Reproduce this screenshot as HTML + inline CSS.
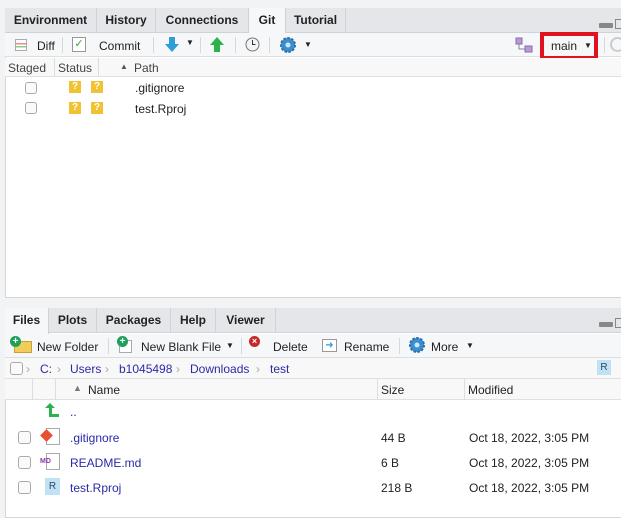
<!DOCTYPE html>
<html><head><style>
*{margin:0;padding:0;box-sizing:border-box}
body{width:621px;height:516px;background:#f2f3f4;font-family:"Liberation Sans",sans-serif;font-size:12px;color:#222;position:relative;overflow:hidden}
.a{position:absolute}
.pane{position:absolute;left:5px;right:-2px;background:#fff;border:1px solid #d4d6d9}
.tabs{position:absolute;left:5px;right:0;height:25px;background:#e4e6e9;border-bottom:1px solid #d0d2d5}
.tab{position:absolute;top:0;height:25px;border-right:1px solid #d0d2d5;font-weight:bold;font-size:12px;line-height:24px;text-align:center;color:#222}
.tab.on{background:#f6f7f8;height:26px}
.tb{position:absolute;left:5px;right:0;height:24px;background:#f6f7f8;border-bottom:1px solid #dcdee0}
.sep{position:absolute;width:1px;height:16px;background:#d6d8da}
.hdr{position:absolute;left:5px;right:0;background:#f8f8f8;border-bottom:1px solid #e0e0e0;color:#444}
.cb{position:absolute;width:12px;height:12px;border:1px solid #aaa;border-radius:3px;background:#fafafa}
.q{position:absolute;width:12px;height:12px;background:#f1c232;color:#fff;font-size:10px;font-weight:bold;text-align:center;line-height:12px}
.lnk{color:#2a2aa8}
</style></head><body>
<div class="pane" style="top:8px;height:290px"></div>
<div class="tabs" style="top:8px">
<div class="tab" style="left:0;width:92px">Environment</div>
<div class="tab" style="left:92px;width:59px">History</div>
<div class="tab" style="left:151px;width:93px">Connections</div>
<div class="tab on" style="left:244px;width:37px">Git</div>
<div class="tab" style="left:281px;width:60px">Tutorial</div>
</div>
<div class="a" style="left:599px;top:23px;width:14px;height:5px;background:#888;border-radius:1px"></div>
<div class="a" style="left:615px;top:19px;width:8px;height:10px;border:1px solid #888"></div>
<div class="tb" style="top:33px"></div>
<div class="a" style="left:15px;top:39px;width:12px;height:12px;border:1px solid #aaa;background:linear-gradient(#fff 30%,#e88 30%,#e88 45%,#fff 45%,#fff 60%,#8c8 60%,#8c8 75%,#fff 75%)"></div>
<div class="a" style="left:37px;top:39px">Diff</div>
<div class="sep" style="left:62px;top:37px"></div>
<div class="a" style="left:72px;top:37px;width:14px;height:15px;border:1px solid #999;background:#fff;color:#3a3;font-size:11px;line-height:12px;text-align:center">✓</div>
<div class="a" style="left:99px;top:39px">Commit</div>
<div class="sep" style="left:153px;top:37px"></div>
<svg class="a" style="left:164px;top:36px" width="16" height="17"><path d="M5 1h6v7h4l-7 8-7-8h4z" fill="#2e9fd6"/></svg>
<div class="a" style="left:186px;top:38px;font-size:8px">▼</div>
<div class="sep" style="left:200px;top:37px"></div>
<svg class="a" style="left:209px;top:36px" width="16" height="17"><path d="M8 1l7 8h-4v7H5V9H1z" fill="#2bb24c"/></svg>
<div class="sep" style="left:235px;top:37px"></div>
<svg class="a" style="left:245px;top:37px" width="15" height="15"><circle cx="7.5" cy="7.5" r="6.5" fill="#f4f4f4" stroke="#777"/><path d="M7.5 3v4.5h3" stroke="#333" fill="none"/></svg>
<div class="sep" style="left:269px;top:37px"></div>
<svg class="a" style="left:279px;top:36px" width="18" height="18"><circle cx="9" cy="9" r="7" fill="#3b8fd0" stroke="#2a6fa8" stroke-width="2" stroke-dasharray="2.5 1.5"/><circle cx="9" cy="9" r="2.5" fill="#cfe6f7"/></svg>
<div class="a" style="left:304px;top:40px;font-size:8px">▼</div>
<svg class="a" style="left:515px;top:37px" width="18" height="16"><rect x="1" y="1" width="6" height="6" fill="#b79bd6" stroke="#8a6bb0"/><rect x="10" y="9" width="7" height="6" fill="#b79bd6" stroke="#8a6bb0"/><path d="M4 7v5h6" stroke="#888" fill="none"/></svg>
<div class="a" style="left:540px;top:32px;width:58px;height:28px;border:4px solid #e0121f"></div>
<div class="a" style="left:551px;top:39px">main</div>
<div class="a" style="left:584px;top:41px;font-size:8px">▼</div>
<div class="sep" style="left:604px;top:37px"></div>
<div class="a" style="left:610px;top:37px;width:15px;height:15px;border:2px solid #ccc;border-radius:50%"></div>
<div class="hdr" style="top:58px;height:19px"></div>
<div class="a" style="left:8px;top:61px;color:#444">Staged</div>
<div class="a" style="left:54px;top:58px;width:1px;height:19px;background:#ddd"></div>
<div class="a" style="left:58px;top:61px;color:#444">Status</div>
<div class="a" style="left:98px;top:58px;width:1px;height:19px;background:#ddd"></div>
<div class="a" style="left:120px;top:62px;font-size:8px;color:#555">▲</div>
<div class="a" style="left:134px;top:61px;color:#444">Path</div>
<div class="cb" style="left:25px;top:82px"></div><div class="q" style="left:69px;top:81px">?</div><div class="q" style="left:91px;top:81px">?</div><div class="a" style="left:135px;top:81px">.gitignore</div>
<div class="cb" style="left:25px;top:102px"></div><div class="q" style="left:69px;top:102px">?</div><div class="q" style="left:91px;top:102px">?</div><div class="a" style="left:135px;top:102px">test.Rproj</div>
<div class="pane" style="top:308px;height:210px"></div>
<div class="tabs" style="top:308px">
<div class="tab on" style="left:0;width:44px">Files</div>
<div class="tab" style="left:44px;width:48px">Plots</div>
<div class="tab" style="left:92px;width:74px">Packages</div>
<div class="tab" style="left:166px;width:45px">Help</div>
<div class="tab" style="left:211px;width:60px">Viewer</div>
</div>
<div class="a" style="left:599px;top:322px;width:14px;height:5px;background:#888;border-radius:1px"></div>
<div class="a" style="left:615px;top:318px;width:8px;height:10px;border:1px solid #888"></div>
<div class="tb" style="top:334px"></div>
<div class="a" style="left:14px;top:341px;width:18px;height:12px;background:#f0cc5a;border:1px solid #c9a233"></div>
<div class="a" style="left:10px;top:336px;width:11px;height:11px;border-radius:50%;background:#1ea05a;color:#fff;font-size:10px;font-weight:bold;line-height:11px;text-align:center">+</div>
<div class="a" style="left:37px;top:340px">New Folder</div>
<div class="sep" style="left:108px;top:338px"></div>
<div class="a" style="left:119px;top:340px;width:13px;height:13px;border:1px solid #aaa;background:#fff"></div>
<div class="a" style="left:117px;top:336px;width:11px;height:11px;border-radius:50%;background:#1ea05a;color:#fff;font-size:10px;font-weight:bold;line-height:11px;text-align:center">+</div>
<div class="a" style="left:141px;top:340px">New Blank File</div>
<div class="a" style="left:226px;top:341px;font-size:8px">▼</div>
<div class="sep" style="left:241px;top:338px"></div>
<div class="a" style="left:249px;top:336px;width:11px;height:11px;border-radius:50%;background:#c62828;color:#fff;font-size:9px;font-weight:bold;line-height:11px;text-align:center">×</div>
<div class="a" style="left:273px;top:340px">Delete</div>
<div class="a" style="left:322px;top:339px;width:15px;height:13px;border:1px solid #999;background:#fff;color:#2e9fd6;font-size:10px;line-height:11px;text-align:center">➜</div>
<div class="a" style="left:344px;top:340px">Rename</div>
<div class="sep" style="left:399px;top:338px"></div>
<svg class="a" style="left:408px;top:336px" width="18" height="18"><circle cx="9" cy="9" r="7" fill="#3b8fd0" stroke="#2a6fa8" stroke-width="2" stroke-dasharray="2.5 1.5"/><circle cx="9" cy="9" r="2.5" fill="#cfe6f7"/></svg>
<div class="a" style="left:431px;top:340px">More</div>
<div class="a" style="left:466px;top:341px;font-size:8px">▼</div>
<div class="a" style="left:5px;right:0;top:358px;height:21px;background:#f8f8f8;border-bottom:1px solid #e0e0e0"></div>
<div class="cb" style="left:10px;top:362px;width:13px;height:13px"></div>
<div class="a" style="left:26px;top:362px;color:#aaa">›</div>
<div class="a lnk" style="left:40px;top:362px">C:</div>
<div class="a" style="left:57px;top:362px;color:#aaa">›</div>
<div class="a lnk" style="left:70px;top:362px">Users</div>
<div class="a" style="left:105px;top:362px;color:#aaa">›</div>
<div class="a lnk" style="left:119px;top:362px">b1045498</div>
<div class="a" style="left:176px;top:362px;color:#aaa">›</div>
<div class="a lnk" style="left:190px;top:362px">Downloads</div>
<div class="a" style="left:256px;top:362px;color:#aaa">›</div>
<div class="a lnk" style="left:270px;top:362px">test</div>
<div class="a" style="left:597px;top:360px;width:14px;height:15px;background:#bfe3f5;color:#346;font-size:10px;text-align:center;line-height:15px">R</div>
<div class="hdr" style="top:379px;height:21px"></div>
<div class="a" style="left:32px;top:379px;width:1px;height:21px;background:#ddd"></div>
<div class="a" style="left:55px;top:379px;width:1px;height:21px;background:#ddd"></div>
<div class="a" style="left:73px;top:383px;font-size:9px;color:#777">▲</div>
<div class="a" style="left:88px;top:383px">Name</div>
<div class="a" style="left:377px;top:379px;width:1px;height:21px;background:#ddd"></div>
<div class="a" style="left:381px;top:383px">Size</div>
<div class="a" style="left:464px;top:379px;width:1px;height:21px;background:#ddd"></div>
<div class="a" style="left:468px;top:383px">Modified</div>
<svg class="a" style="left:44px;top:402px" width="16" height="16"><path d="M6 1l5 5h-3v6h7v3H5V6H1z" fill="#2bb24c"/></svg>
<div class="a lnk" style="left:70px;top:405px">..</div>
<div class="cb" style="left:18px;top:431px;width:13px;height:13px"></div>
<div class="a" style="left:46px;top:428px;width:14px;height:17px;border:1px solid #aaa;background:#fff"></div>
<div class="a" style="left:42px;top:431px;width:9px;height:9px;background:#e8502f;transform:rotate(45deg)"></div>
<div class="a lnk" style="left:70px;top:431px">.gitignore</div><div class="a" style="left:381px;top:431px">44 B</div><div class="a" style="left:469px;top:431px">Oct 18, 2022, 3:05 PM</div>
<div class="cb" style="left:18px;top:456px;width:13px;height:13px"></div>
<div class="a" style="left:46px;top:453px;width:14px;height:17px;border:1px solid #aaa;background:#fff"></div>
<div class="a" style="left:40px;top:458px;font-size:7px;color:#8a3aa8;font-weight:bold">MD</div>
<div class="a lnk" style="left:70px;top:456px">README.md</div><div class="a" style="left:381px;top:456px">6 B</div><div class="a" style="left:469px;top:456px">Oct 18, 2022, 3:05 PM</div>
<div class="cb" style="left:18px;top:481px;width:13px;height:13px"></div>
<div class="a" style="left:45px;top:478px;width:15px;height:17px;background:#bfe3f5;color:#346;font-size:10px;text-align:center;line-height:17px">R</div>
<div class="a lnk" style="left:70px;top:481px">test.Rproj</div><div class="a" style="left:381px;top:481px">218 B</div><div class="a" style="left:469px;top:481px">Oct 18, 2022, 3:05 PM</div>
</body></html>
